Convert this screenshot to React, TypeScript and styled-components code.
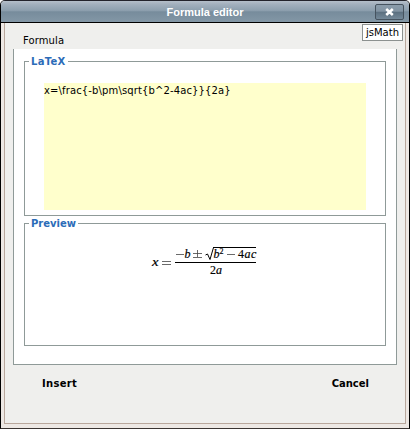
import React from "react";
import styled, { createGlobalStyle } from "styled-components";

const GlobalStyle = createGlobalStyle`
  * { box-sizing: border-box; }
  body { margin: 0; background: #fff; font-family: "DejaVu Sans", Verdana, sans-serif; font-size: 10px; color: #000; overflow: hidden; }
`;

const Dialog = styled.div`
  width: 410px;
  height: 429px;
  display: flex;
  flex-direction: column;
  background: #ede8e4;
  border: 1px solid #000;
  border-bottom-color: #3a3532;
  border-top-color: #23232b;
  border-radius: 5px 5px 0 0;
`;

const TitleBar = styled.header`
  height: 22px;
  flex: none;
  display: grid;
  grid-template-columns: 33px 1fr 33px;
  align-items: center;
  padding-right: 5px;
  background: linear-gradient(#b5bfca 0%, #a3b0bd 15%, #8d9fae 45%, #778c9c 52%, #8397a6 100%);
  border-bottom: 1px solid #000;
  border-radius: 4px 4px 0 0;
`;

const Title = styled.h1`
  grid-column: 2;
  margin: 0 0 0 5px;
  text-align: center;
  color: #fff;
  font: bold 11px/14px "Liberation Sans", Arial, sans-serif;
`;

const CloseButton = styled.button`
  width: 29px;
  height: 16px;
  margin-top: 1px;
  padding: 0;
  justify-self: end;
  display: flex;
  align-items: center;
  justify-content: center;
  border: 1px solid #46535f;
  border-radius: 2px;
  background: linear-gradient(#8b9cab 0%, #8294a3 45%, #5b6f7f 50%, #748999 100%);
`;

const Body = styled.main`
  flex: 1;
  display: flex;
  flex-direction: column;
  margin: 0 3px 4px;
  background: #efefed;
  border: 1px solid #b8a79c;
  border-top: 0;
`;

const TabRow = styled.div`
  height: 26px;
  flex: none;
  display: flex;
  justify-content: space-between;
  padding: 1px 2px 0 18px;
`;

const TabLabel = styled.span`
  line-height: 14px;
  margin-top: 10px;
  letter-spacing: 0.1px;
`;

const Tooltip = styled.span`
  width: 41px;
  height: 17px;
  line-height: 15px;
  text-align: center;
  background: #fff;
  border: 1px solid #8c9190;
`;

const Panel = styled.section`
  width: 384px;
  height: 316px;
  margin-left: 8px;
  padding: 12px 10px 0;
  background: #fff;
  border: 1px solid #8f9a98;
  border-top: 0;
`;

const Group = styled.section<{ $height: number; $gap?: number }>`
  height: ${(p) => p.$height}px;
  margin-bottom: ${(p) => p.$gap ?? 0}px;
  border: 1px solid #8f9a98;
`;

const Legend = styled.h2<{ $tracking: number }>`
  width: max-content;
  height: 14px;
  margin: -7px 0 0 4px;
  padding: 0 2px;
  background: #fff;
  color: #2b6cb8;
  font: bold 10px/14px "DejaVu Sans", Verdana, sans-serif;
  letter-spacing: ${(p) => p.$tracking}px;
`;

const Source = styled.div`
  width: 322px;
  height: 127px;
  margin: 14px 0 0 19px;
  line-height: 15px;
  letter-spacing: 0.13px;
  background: #ffffcc;
`;

const Formula = styled.svg`
  display: block;
  margin: 13px 0 0 122px;
  font-family: "Liberation Serif", "Times New Roman", serif;
  font-size: 12px;
`;

const Actions = styled.footer`
  display: flex;
  justify-content: space-between;
  padding: 12px 36px 0 37px;
`;

const Action = styled.button<{ $tracking: number }>`
  padding: 0;
  border: 0;
  background: none;
  color: #000;
  font: bold 10px/14px "DejaVu Sans", Verdana, sans-serif;
  letter-spacing: ${(p) => p.$tracking}px;
`;

const SOURCE = String.raw`x=\frac{-b\pm\sqrt{b^2-4ac}}{2a}`;

export default function App() {
  return (
    <>
      <GlobalStyle />
      <Dialog>
        <TitleBar>
          <Title>Formula editor</Title>
          <CloseButton aria-label="Close">
            <svg width="9" height="8" viewBox="0 0 9 8">
              <path d="M1.2 1 7.8 7M7.8 1 1.2 7" stroke="#fff" strokeWidth="2.5" />
            </svg>
          </CloseButton>
        </TitleBar>
        <Body>
          <TabRow>
            <TabLabel>Formula</TabLabel>
            <Tooltip>jsMath</Tooltip>
          </TabRow>
          <Panel>
            <Group $height={155} $gap={7}>
              <Legend $tracking={0.3}>LaTeX</Legend>
              <Source>{SOURCE}</Source>
            </Group>
            <Group $height={123}>
              <Legend $tracking={0}>Preview</Legend>
              <Formula width="114" height="36" viewBox="147 244 114 36">
                <g fontStyle="italic" stroke="#000" strokeWidth=".2">
                  <text x="152" y="266" textLength="6.5" lengthAdjust="spacingAndGlyphs">x</text>
                  <text x="184.5" y="258">b</text>
                  <text x="213.5" y="258">b</text>
                  <text x="244.5" y="258">a</text>
                  <text x="251" y="258">c</text>
                  <text x="216" y="274">a</text>
                </g>
                <g stroke="#000" strokeWidth=".15">
                  <text x="219.5" y="253.5" fontSize="8">2</text>
                  <text x="238" y="258">4</text>
                  <text x="210" y="274">2</text>
                </g>
                <g fill="none" stroke="#000" strokeWidth="1">
                  <path d="M175 262.5H256" />
                  <path d="M213 247.5H256" />
                  <path d="M205.5 255 207.5 254 210 259.5 213.5 247.5" />
                  <path
                    d="M162 261.5H171M162 264.5H171M176 254.5H184M227 254.5H235M193 253.5H202M197.5 250V257M193 257.5H202"
                    stroke="#444"
                    strokeWidth=".8"
                  />
                </g>
              </Formula>
            </Group>
          </Panel>
          <Actions>
            <Action $tracking={0.3}>Insert</Action>
            <Action $tracking={0}>Cancel</Action>
          </Actions>
        </Body>
      </Dialog>
    </>
  );
}
